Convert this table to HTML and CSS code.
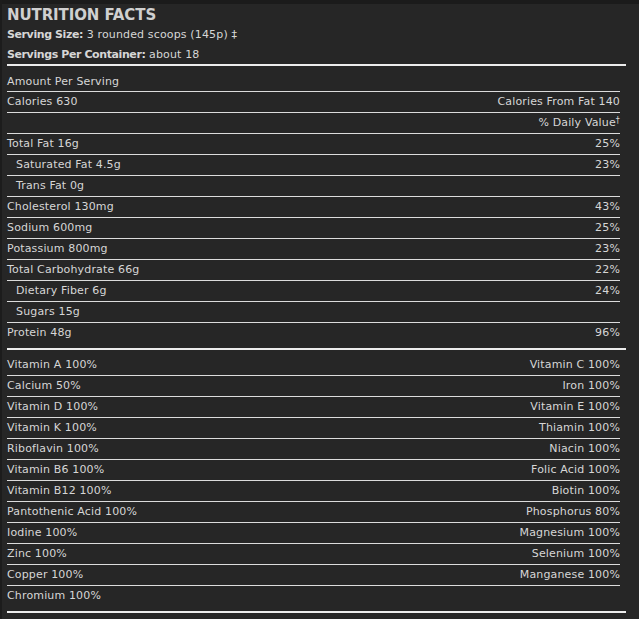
FILE: index.html
```html
<!DOCTYPE html>
<html>
<head>
<meta charset="utf-8">
<link rel="stylesheet" href="styles.css">
</head>
<body>
<div class="top-strip"></div>
<div class="label">
  <h1 class="title">NUTRITION FACTS</h1>
  <div class="serving"><b>Serving Size:</b> 3 rounded scoops (145p) &#8225;</div>
  <div class="serving short"><b>Servings Per Container:</b> about 18</div>
  <div class="thick"></div>
  <div class="row amount"><span>Amount Per Serving</span></div>
  <div class="row"><span>Calories 630</span><span>Calories From Fat 140</span></div>
  <div class="row"><span></span><span>% Daily Value<sup class="dagger">&#8224;</sup></span></div>
  <div class="row"><span>Total Fat 16g</span><span>25%</span></div>
  <div class="row sub"><span>Saturated Fat 4.5g</span><span>23%</span></div>
  <div class="row sub"><span>Trans Fat 0g</span><span></span></div>
  <div class="row"><span>Cholesterol 130mg</span><span>43%</span></div>
  <div class="row"><span>Sodium 600mg</span><span>25%</span></div>
  <div class="row"><span>Potassium 800mg</span><span>23%</span></div>
  <div class="row"><span>Total Carbohydrate 66g</span><span>22%</span></div>
  <div class="row sub"><span>Dietary Fiber 6g</span><span>24%</span></div>
  <div class="row sub"><span>Sugars 15g</span><span></span></div>
  <div class="row last"><span>Protein 48g</span><span>96%</span></div>
  <div class="thick"></div>
  <div class="row first"><span>Vitamin A 100%</span><span>Vitamin C 100%</span></div>
  <div class="row"><span>Calcium 50%</span><span>Iron 100%</span></div>
  <div class="row"><span>Vitamin D 100%</span><span>Vitamin E 100%</span></div>
  <div class="row"><span>Vitamin K 100%</span><span>Thiamin 100%</span></div>
  <div class="row"><span>Riboflavin 100%</span><span>Niacin 100%</span></div>
  <div class="row"><span>Vitamin B6 100%</span><span>Folic Acid 100%</span></div>
  <div class="row"><span>Vitamin B12 100%</span><span>Biotin 100%</span></div>
  <div class="row"><span>Pantothenic Acid 100%</span><span>Phosphorus 80%</span></div>
  <div class="row"><span>Iodine 100%</span><span>Magnesium 100%</span></div>
  <div class="row"><span>Zinc 100%</span><span>Selenium 100%</span></div>
  <div class="row"><span>Copper 100%</span><span>Manganese 100%</span></div>
  <div class="row last"><span>Chromium 100%</span><span></span></div>
  <div class="thick"></div>
</div>
</body>
</html>
```
FILE: styles.css
```css
html, body {
  margin: 0;
  padding: 0;
}
body {
  background: #262626;
  color: #d6d6d6;
  font-family: "DejaVu Sans", Verdana, sans-serif;
  font-size: 11px;
  letter-spacing: 0.15px;
  border-left: 2px solid #1c1c1c;
  min-height: 619px;
  box-sizing: border-box;
}
.top-strip {
  height: 4px;
  background: #1b1b1b;
  margin-left: -2px;
}
.label {
  width: 613px;
  padding-left: 5px;
}
.title {
  margin: 0;
  padding-top: 1px;
  font-size: 15px;
  line-height: 20px;
  font-weight: bold;
  letter-spacing: -0.1px;
  color: #d0d0d0;
}
.serving {
  line-height: 20px;
}
.serving.short {
  line-height: 19px;
}
.serving b {
  font-weight: bold;
  letter-spacing: -0.4px;
}
.thick {
  height: 2px;
  background: #ececec;
  width: 619px;
}
.row {
  display: flex;
  justify-content: space-between;
  line-height: 20px;
  height: 20px;
  border-bottom: 1px solid #dcdcdc;
}
.row.amount {
  height: 19px;
  line-height: 19px;
  padding-top: 6px;
}
.row.sub {
  padding-left: 9px;
}
.row.last {
  border-bottom: none;
  height: 25px;
}
.row.first {
  padding-top: 5px;
}
.dagger {
  font-size: 8px;
  vertical-align: 3px;
  line-height: 0;
}
```
